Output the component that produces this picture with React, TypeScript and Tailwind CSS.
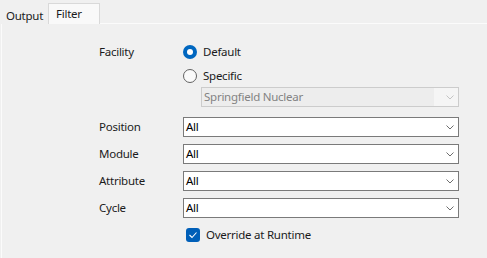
import React from "react";

const font = { fontFamily: '"Noto Sans", "Open Sans", sans-serif' };

function Chevron({ disabled }: { disabled?: boolean }) {
  return (
    <svg width="8" height="5" viewBox="0 0 8 5" className="shrink-0">
      <path
        d="M0.5 0.5 L4 4 L7.5 0.5"
        fill="none"
        stroke={disabled ? "#c4c4c4" : "#6e6e6e"}
        strokeWidth="1"
      />
    </svg>
  );
}

function Combo({ value }: { value: string }) {
  return (
    <div className="flex h-[20px] w-[276px] items-center justify-between border border-[#7a7a7a] bg-white pl-[2px] pr-[4px]">
      <span className="text-[11.5px] leading-none tracking-[-0.25px] text-black">{value}</span>
      <Chevron />
    </div>
  );
}

function Radio({ checked, label }: { checked?: boolean; label: string }) {
  return (
    <div className="flex h-[20px] items-center">
      {checked ? (
        <span className="flex h-[14px] w-[14px] items-center justify-center rounded-full bg-[#0067c0]">
          <span className="h-[6px] w-[6px] rounded-full bg-white" />
        </span>
      ) : (
        <span className="h-[14px] w-[14px] rounded-full border border-[#626262] bg-[#fafafa]" />
      )}
      <span className="ml-[6px] text-[11.5px] leading-none tracking-[-0.25px] text-[#1b1b1b]">{label}</span>
    </div>
  );
}

const rows = ["Position", "Module", "Attribute", "Cycle"];

export default function App() {
  return (
    <div className="h-[258px] w-[487px] overflow-hidden bg-[#f0f0f0] text-[11.5px] tracking-[-0.25px]" style={font}>
      <div className="flex h-[24px] items-end">
        <div className="flex h-[16px] w-[48px] items-center pl-[6px] leading-none text-[#1b1b1b]">
          Output
        </div>
        <div className="flex h-[21px] w-[52px] items-center border border-b-0 border-[#d9d9d9] bg-[#f9f9f9] pl-[7px] pb-[1px] leading-none text-[#1b1b1b]">
          Filter
        </div>
        <div className="h-[1px] flex-1 bg-[#fbfbfb]" />
      </div>

      <div className="ml-[1px] h-[234px] border-l border-[#fbfbfb] pt-[18px] pl-[97px]">
        <div className="flex">
          <div className="w-[84px] pt-[1px] text-[#1b1b1b]">Facility</div>
          <div className="flex flex-col">
            <Radio checked label="Default" />
            <div className="mt-[4px]">
              <Radio label="Specific" />
            </div>
            <div className="ml-[18px] mt-[1px] flex h-[20px] w-[258px] items-center justify-between border border-[#cccccc] bg-[#f5f5f5] pr-[4px]">
              <div className="flex h-full flex-1 items-center bg-[#ededed] pl-[2px] leading-none text-[#838383]">
                Springfield Nuclear
              </div>
              <div className="ml-[12px]">
                <Chevron disabled />
              </div>
            </div>
          </div>
        </div>

        <div className="mt-[10px] flex flex-col gap-[7px]">
          {rows.map((r) => (
            <div key={r} className="flex items-center">
              <div className="w-[84px] text-[#1b1b1b]">{r}</div>
              <Combo value="All" />
            </div>
          ))}
          <div className="flex h-[20px] items-center pl-[87px]">
            <span className="flex h-[14px] w-[14px] items-center justify-center rounded-[3px] bg-[#005fb8]">
              <svg width="10" height="8" viewBox="0 0 10 8">
                <path d="M1.5 4 L4 6.5 L8.5 1.5" fill="none" stroke="white" strokeWidth="1.1" />
              </svg>
            </span>
            <span className="ml-[6px] leading-none text-[#1b1b1b]">Override at Runtime</span>
          </div>
        </div>
      </div>
    </div>
  );
}
